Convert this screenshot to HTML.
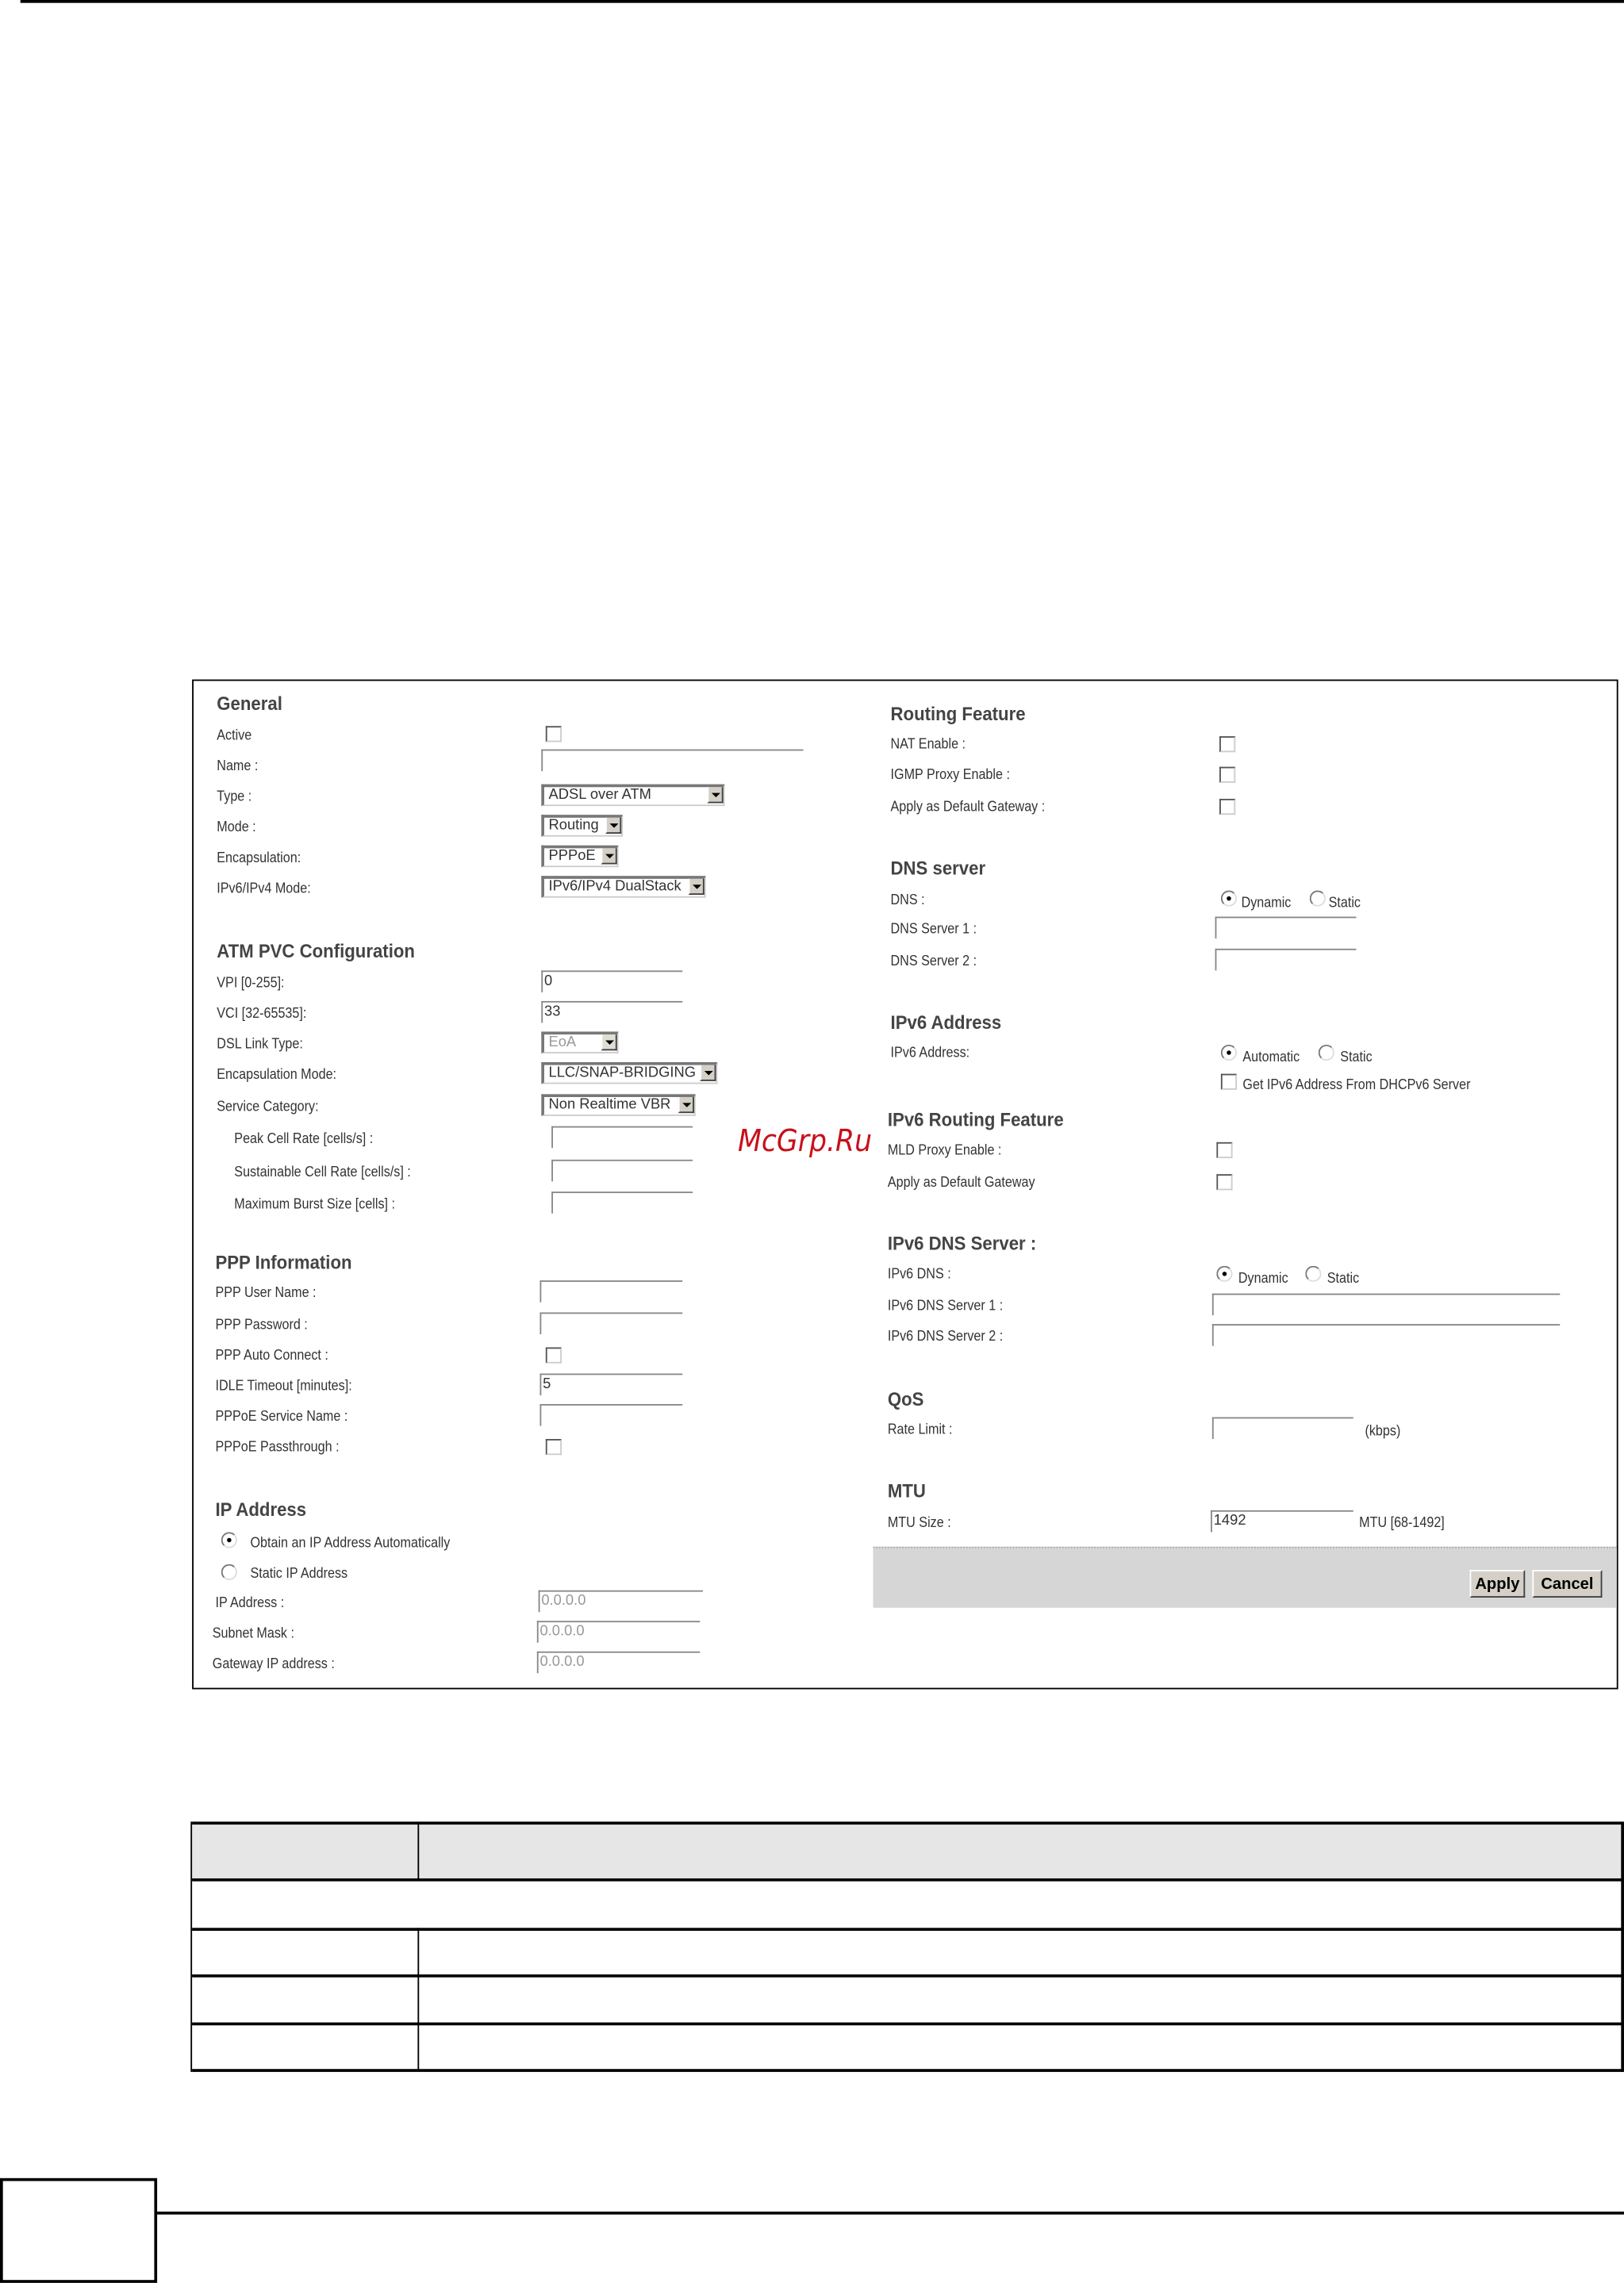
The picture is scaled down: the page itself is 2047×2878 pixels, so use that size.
<!DOCTYPE html>
<html><head><meta charset="utf-8">
<style>
html,body{margin:0;padding:0;background:#fff;}
body{width:2047px;height:2875px;overflow:hidden;position:relative;}
#w{position:absolute;left:0;top:0;width:1116px;height:1568px;transform:scale(1.8342);transform-origin:0 0;font-family:"Liberation Sans",sans-serif;color:#333;}
#w div{position:absolute;}
.l{font-size:10px;line-height:12px;white-space:nowrap;transform:translateY(1.5px) scaleX(0.88);transform-origin:0 0;}
.h{font-size:13px;line-height:16px;font-weight:bold;color:#444;white-space:nowrap;transform:translateY(1px) scaleX(0.93);transform-origin:0 0;}
.cb{width:9px;height:9px;border:1px solid #555;border-right-color:#ccc;border-bottom-color:#ccc;background:#fff;}
.in{height:15px;border-top:1px solid #888;border-left:1px solid #888;font-size:10px;line-height:14px;padding-left:1px;box-sizing:border-box;}
.sel{height:15px;border:1px solid #777;border-top-width:2px;border-left-width:2px;border-right-color:#ccc;border-bottom-color:#ccc;box-sizing:border-box;font-size:10px;line-height:12px;padding-left:3px;background:#fff;white-space:nowrap;}
.sel i{position:absolute;right:0;top:0;width:11px;height:11px;background:#d4d0c8;border-left:1px solid #fff;border-right:1px solid #404040;border-bottom:1px solid #404040;box-sizing:border-box;}
.sel i:after{content:"";position:absolute;left:2px;top:4px;border-left:3px solid transparent;border-right:3px solid transparent;border-top:3px solid #000;}
.rd{width:9px;height:9px;border-radius:50%;border:1px solid #777;border-right-color:#ddd;border-bottom-color:#ddd;background:#fff;}
.rd.on:after{content:"";position:absolute;left:3px;top:3px;width:3px;height:3px;border-radius:50%;background:#000;}
.btn{height:19px;border:1px solid #fff;border-right-color:#404040;border-bottom-color:#404040;background:#d4d0c8;font-size:11px;font-weight:bold;line-height:18px;text-align:center;color:#000;box-sizing:border-box;}
</style></head><body><div id="w">
<div style="left:14px;top:0;width:1102px;height:2px;background:#000"></div>

<div style="left:132px;top:467px;width:978px;height:692px;border:1.5px solid #000"></div>

<div class="h" style="left:149px;top:475px">General</div>
<div class="l" style="left:149px;top:499px">Active</div>
<div class="cb" style="left:375px;top:499px"></div>
<div class="l" style="left:149px;top:520px">Name :</div>
<div class="in" style="left:372px;top:515px;width:180px"></div>
<div class="l" style="left:149px;top:541px">Type :</div>
<div class="sel" style="left:372px;top:539px;width:126px">ADSL over ATM<i></i></div>
<div class="l" style="left:149px;top:562px">Mode :</div>
<div class="sel" style="left:372px;top:560px;width:56px">Routing<i></i></div>
<div class="l" style="left:149px;top:583px">Encapsulation:</div>
<div class="sel" style="left:372px;top:581px;width:53px">PPPoE<i></i></div>
<div class="l" style="left:149px;top:604px">IPv6/IPv4 Mode:</div>
<div class="sel" style="left:372px;top:602px;width:113px">IPv6/IPv4 DualStack<i></i></div>

<div class="h" style="left:149px;top:645px">ATM PVC Configuration</div>
<div class="l" style="left:149px;top:669px">VPI [0-255]:</div>
<div class="in" style="left:372px;top:667px;width:97px">0</div>
<div class="l" style="left:149px;top:690px">VCI [32-65535]:</div>
<div class="in" style="left:372px;top:688px;width:97px">33</div>
<div class="l" style="left:149px;top:711px">DSL Link Type:</div>
<div class="sel" style="left:372px;top:709px;width:53px;color:#999">EoA<i style="background:#e0ddd6"></i></div>
<div class="l" style="left:149px;top:732px">Encapsulation Mode:</div>
<div class="sel" style="left:372px;top:730px;width:121px">LLC/SNAP-BRIDGING<i></i></div>
<div class="l" style="left:149px;top:754px">Service Category:</div>
<div class="sel" style="left:372px;top:752px;width:106px">Non Realtime VBR<i></i></div>
<div class="l" style="left:161px;top:776px">Peak Cell Rate [cells/s] :</div>
<div class="in" style="left:379px;top:774px;width:97px"></div>
<div class="l" style="left:161px;top:799px">Sustainable Cell Rate [cells/s] :</div>
<div class="in" style="left:379px;top:797px;width:97px"></div>
<div class="l" style="left:161px;top:821px">Maximum Burst Size [cells] :</div>
<div class="in" style="left:379px;top:819px;width:97px"></div>

<div class="h" style="left:148px;top:859px">PPP Information</div>
<div class="l" style="left:148px;top:882px">PPP User Name :</div>
<div class="in" style="left:371px;top:880px;width:98px"></div>
<div class="l" style="left:148px;top:904px">PPP Password :</div>
<div class="in" style="left:371px;top:902px;width:98px"></div>
<div class="l" style="left:148px;top:925px">PPP Auto Connect :</div>
<div class="cb" style="left:375px;top:926px"></div>
<div class="l" style="left:148px;top:946px">IDLE Timeout [minutes]:</div>
<div class="in" style="left:371px;top:944px;width:98px">5</div>
<div class="l" style="left:148px;top:967px">PPPoE Service Name :</div>
<div class="in" style="left:371px;top:965px;width:98px"></div>
<div class="l" style="left:148px;top:988px">PPPoE Passthrough :</div>
<div class="cb" style="left:375px;top:989px"></div>

<div class="h" style="left:148px;top:1029px">IP Address</div>
<div class="rd on" style="left:152px;top:1053px"></div>
<div class="l" style="left:172px;top:1054px">Obtain an IP Address Automatically</div>
<div class="rd" style="left:152px;top:1075px"></div>
<div class="l" style="left:172px;top:1075px">Static IP Address</div>
<div class="l" style="left:148px;top:1095px">IP Address :</div>
<div class="in" style="left:370px;top:1093px;width:113px;color:#999">0.0.0.0</div>
<div class="l" style="left:146px;top:1116px">Subnet Mask :</div>
<div class="in" style="left:369px;top:1114px;width:112px;color:#999">0.0.0.0</div>
<div class="l" style="left:146px;top:1137px">Gateway IP address :</div>
<div class="in" style="left:369px;top:1135px;width:112px;color:#999">0.0.0.0</div>

<div class="h" style="left:612px;top:482px">Routing Feature</div>
<div class="l" style="left:612px;top:505px">NAT Enable :</div>
<div class="cb" style="left:838px;top:506px"></div>
<div class="l" style="left:612px;top:526px">IGMP Proxy Enable :</div>
<div class="cb" style="left:838px;top:527px"></div>
<div class="l" style="left:612px;top:548px">Apply as Default Gateway :</div>
<div class="cb" style="left:838px;top:549px"></div>

<div class="h" style="left:612px;top:588px">DNS server</div>
<div class="l" style="left:612px;top:612px">DNS :</div>
<div class="rd on" style="left:839px;top:612px"></div>
<div class="l" style="left:853px;top:614px">Dynamic</div>
<div class="rd" style="left:900px;top:612px"></div>
<div class="l" style="left:913px;top:614px">Static</div>
<div class="l" style="left:612px;top:632px">DNS Server 1 :</div>
<div class="in" style="left:835px;top:630px;width:97px"></div>
<div class="l" style="left:612px;top:654px">DNS Server 2 :</div>
<div class="in" style="left:835px;top:652px;width:97px"></div>

<div class="h" style="left:612px;top:694px">IPv6 Address</div>
<div class="l" style="left:612px;top:717px">IPv6 Address:</div>
<div class="rd on" style="left:839px;top:718px"></div>
<div class="l" style="left:854px;top:720px">Automatic</div>
<div class="rd" style="left:906px;top:718px"></div>
<div class="l" style="left:921px;top:720px">Static</div>
<div class="cb" style="left:839px;top:738px"></div>
<div class="l" style="left:854px;top:739px">Get IPv6 Address From DHCPv6 Server</div>

<div class="h" style="left:610px;top:761px">IPv6 Routing Feature</div>
<div class="l" style="left:610px;top:784px">MLD Proxy Enable :</div>
<div class="cb" style="left:836px;top:785px"></div>
<div class="l" style="left:610px;top:806px">Apply as Default Gateway</div>
<div class="cb" style="left:836px;top:807px"></div>

<div class="h" style="left:610px;top:846px">IPv6 DNS Server :</div>
<div class="l" style="left:610px;top:869px">IPv6 DNS :</div>
<div class="rd on" style="left:836px;top:870px"></div>
<div class="l" style="left:851px;top:872px">Dynamic</div>
<div class="rd" style="left:897px;top:870px"></div>
<div class="l" style="left:912px;top:872px">Static</div>
<div class="l" style="left:610px;top:891px">IPv6 DNS Server 1 :</div>
<div class="in" style="left:833px;top:889px;width:239px"></div>
<div class="l" style="left:610px;top:912px">IPv6 DNS Server 2 :</div>
<div class="in" style="left:833px;top:910px;width:239px"></div>

<div class="h" style="left:610px;top:953px">QoS</div>
<div class="l" style="left:610px;top:976px">Rate Limit :</div>
<div class="in" style="left:833px;top:974px;width:97px"></div>
<div class="l" style="left:938px;top:977px">(kbps)</div>

<div class="h" style="left:610px;top:1016px">MTU</div>
<div class="l" style="left:610px;top:1040px">MTU Size :</div>
<div class="in" style="left:832px;top:1038px;width:98px;line-height:14px">1492</div>
<div class="l" style="left:934px;top:1040px">MTU [68-1492]</div>

<div style="left:600px;top:1063px;width:511px;height:41px;background:#d6d6d6;border-top:1px dotted #aaa"></div>
<div class="btn" style="left:1010px;top:1079px;width:38px">Apply</div>
<div class="btn" style="left:1053px;top:1079px;width:48px">Cancel</div>

<div style="left:507px;top:771px;font-size:21px;line-height:26px;color:#c8101a;font-style:italic;font-family:'DejaVu Sans',sans-serif;transform:scaleX(0.9);transform-origin:0 0">McGrp.Ru</div>

<div style="left:132px;top:1253px;width:983px;height:39px;background:#e6e6e6"></div>
<div style="left:132px;top:1252px;width:983px;height:1.5px;background:#000"></div>
<div style="left:132px;top:1291px;width:983px;height:1.5px;background:#000"></div>
<div style="left:132px;top:1325px;width:983px;height:1.5px;background:#000"></div>
<div style="left:132px;top:1357px;width:983px;height:1.5px;background:#000"></div>
<div style="left:132px;top:1390px;width:983px;height:1.5px;background:#000"></div>
<div style="left:132px;top:1422px;width:983px;height:1.5px;background:#000"></div>
<div style="left:131px;top:1252px;width:1.2px;height:172px;background:#000"></div>
<div style="left:1114px;top:1252px;width:1.5px;height:172px;background:#000"></div>
<div style="left:287px;top:1252px;width:1.2px;height:40px;background:#000"></div>
<div style="left:287px;top:1325px;width:1.2px;height:98px;background:#000"></div>

<div style="left:0;top:1497px;width:104px;height:68px;border:2px solid #000"></div>
<div style="left:108px;top:1520px;width:1008px;height:1.5px;background:#000"></div>
</div></body></html>
